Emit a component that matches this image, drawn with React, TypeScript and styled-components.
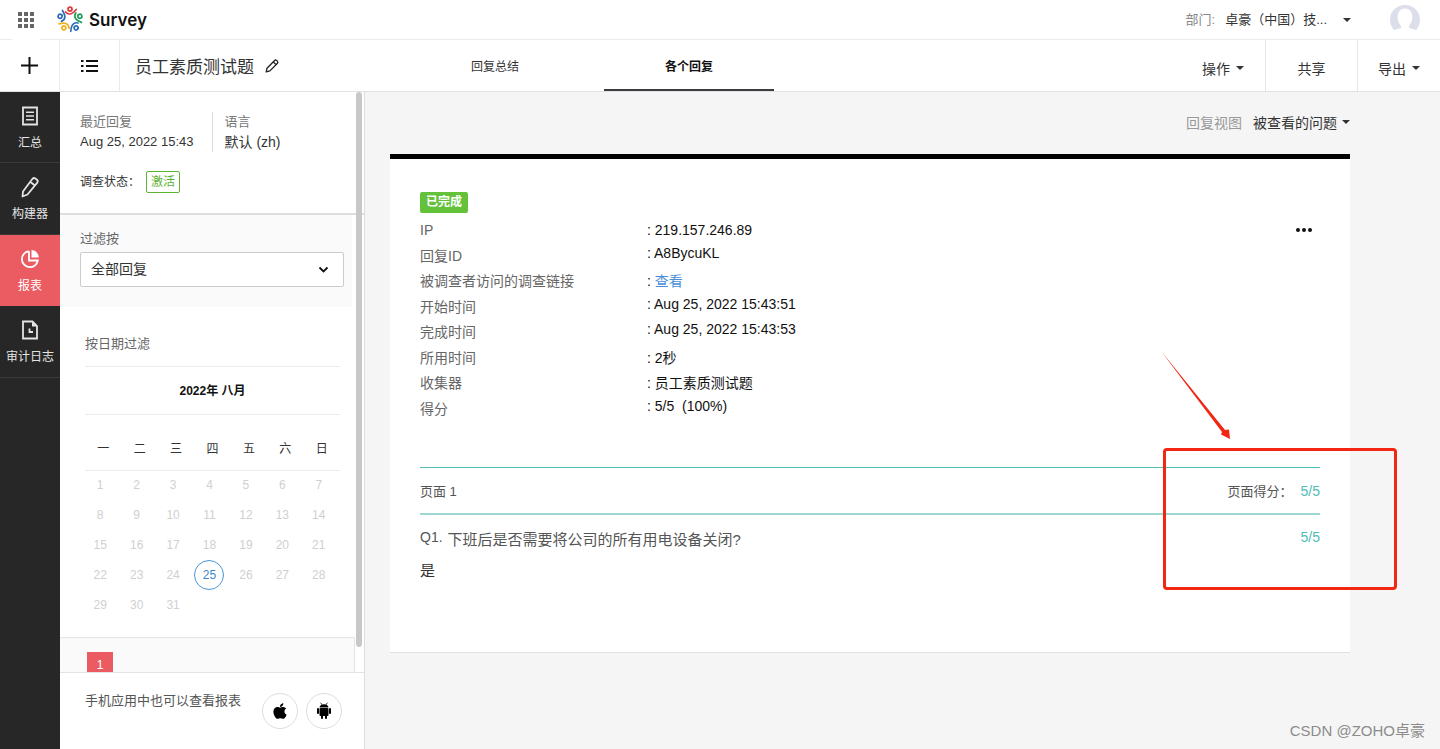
import React from "react";
import styled, { createGlobalStyle } from "styled-components";
import { FaApple } from "react-icons/fa";

const GlobalStyle = createGlobalStyle`
  * { box-sizing: border-box; }
  body {
    margin: 0;
    background: #f5f5f5;
    color: #333;
    font-family: "Liberation Sans", "Noto Sans CJK SC", sans-serif;
    font-size: 14px;
  }
  button, select { font: inherit; color: inherit; }
`;

const Shell = styled.div`
  position: relative;
  display: flex;
  flex-direction: column;
  height: 100vh;
  min-height: 640px;
  overflow: hidden;
`;

const PlainButton = styled.button`
  display: flex;
  align-items: center;
  justify-content: center;
  padding: 0;
  border: 0;
  background: none;
  cursor: pointer;
`;

/* Top bar */

const TopBar = styled.header`
  display: flex;
  align-items: center;
  flex: none;
  height: 40px;
  background: #fff;
  border-bottom: 1px solid #ebebeb;
`;

const AppsButton = styled(PlainButton)`
  width: 28px;
  height: 40px;
  margin: 0 16px -1px 12px;
  background: #fff;
`;

const Brand = styled.a`
  display: flex;
  align-items: center;
  gap: 5px;
  color: #111;
  font: 600 17px/24px Inter, sans-serif;
  text-decoration: none;
`;

const Department = styled.div`
  display: flex;
  align-items: center;
  margin-left: auto;
  font-size: 13px;
  line-height: 20px;
  color: #888;
`;

const DepartmentButton = styled(PlainButton)`
  gap: 16px;
  margin-left: 10px;
  color: #333;
`;

const Avatar = styled(PlainButton)`
  margin: 0 19px 0 38px;
`;

const Caret = styled.span`
  border: 4px solid transparent;
  border-top-color: currentColor;
  border-bottom: 0;
`;

/* Survey bar */

const SurveyBar = styled.div`
  display: flex;
  flex: none;
  height: 52px;
  background: #fff;
  border-bottom: 1px solid #e2e2e2;
`;

const SquareButton = styled(PlainButton)`
  width: 60px;
  border-right: 1px solid #ebebeb;
  color: #111;
`;

const Title = styled.h1`
  display: flex;
  align-items: center;
  gap: 10px;
  width: 290px;
  margin: 0;
  padding-left: 15px;
  font-size: 17px;
  font-weight: 400;
`;

const Tabs = styled.nav`
  display: flex;
  gap: 24px;
  margin-right: auto;
`;

const Tab = styled.a<{ $active?: boolean }>`
  display: flex;
  align-items: center;
  justify-content: center;
  width: 170px;
  border-top: 2px solid transparent;
  border-bottom: 2px solid ${(p) => (p.$active ? "#3c3c40" : "transparent")};
  color: ${(p) => (p.$active ? "#111" : "#333")};
  font-size: 12px;
  font-weight: ${(p) => (p.$active ? 700 : 400)};
  text-decoration: none;
`;

const Action = styled(PlainButton)<{ $first?: boolean }>`
  gap: 6px;
  width: ${(p) => (p.$first ? 84 : 92)}px;
  padding-top: 4px;
  border-left: ${(p) => (p.$first ? "0" : "1px solid #e6e6e6")};
  &:last-child { width: 83px; }
`;

/* Body */

const Body = styled.div`
  display: flex;
  flex: 1;
  min-height: 0;
`;

const Rail = styled.nav`
  flex: none;
  width: 60px;
  background: #272727;
`;

const RailLink = styled.a<{ $active?: boolean }>`
  display: flex;
  flex-direction: column;
  align-items: center;
  gap: 6px;
  height: 71px;
  padding-top: 12px;
  border-bottom: 1px solid ${(p) => (p.$active ? "#ea5c62" : "#3a3a3a")};
  background: ${(p) => (p.$active ? "#ea5c62" : "transparent")};
  color: ${(p) => (p.$active ? "#fff" : "#e4e4e4")};
  font-size: 12px;
  line-height: 18px;
  text-decoration: none;
  &:nth-child(even) { height: 72px; }
`;

const Side = styled.aside`
  display: flex;
  flex-direction: column;
  flex: none;
  width: 305px;
  background: #fff;
  border-right: 1px solid #ddd;
`;

const SideScroll = styled.div`
  position: relative;
  flex: 1;
  min-height: 0;
  overflow: hidden;
`;

const ScrollThumb = styled.div`
  position: absolute;
  top: 0;
  right: 2px;
  bottom: 25px;
  width: 6px;
  border-radius: 3px;
  background: #c8c8c8;
`;

const Summary = styled.section`
  height: 123px;
  padding: 20px 20px 0;
  border-bottom: 2px solid #dedede;
`;

const Facts = styled.dl`
  display: flex;
  margin: 0;
`;

const Fact = styled.div`
  padding-right: 18px;
  & + & {
    padding-left: 12px;
    border-left: 1px solid #ddd;
  }
`;

const FactName = styled.dt`
  color: #777;
  font-size: 13px;
  line-height: 20px;
`;

const FactValue = styled.dd<{ $large?: boolean }>`
  margin: 0;
  font-size: ${(p) => (p.$large ? 14 : 13)}px;
  line-height: 20px;
`;

const Status = styled.div`
  display: flex;
  align-items: center;
  gap: 6px;
  margin-top: 19px;
  font-size: 12px;
  line-height: 22px;
`;

const StatusTag = styled.span`
  padding: 0 4px;
  border: 1px solid #5cb531;
  border-radius: 2px;
  color: #5cb531;
  line-height: 20px;
`;

const FilterBox = styled.section`
  height: 92px;
  margin-right: 12px;
  padding: 14px 8px 0 20px;
  background: #fafafa;
`;

const FilterLabel = styled.label`
  display: block;
  color: #666;
  font-size: 13px;
  line-height: 20px;
`;

const SelectWrap = styled.div`
  position: relative;
  margin-top: 3px;
`;

const Select = styled.select`
  appearance: none;
  display: block;
  width: 100%;
  height: 35px;
  padding: 0 10px 2px;
  border: 1px solid #ccc;
  border-radius: 2px;
  background: #fff;
`;

const SelectArrow = styled.svg`
  position: absolute;
  top: 12px;
  right: 15px;
  pointer-events: none;
`;

const CalendarBox = styled.section`
  padding: 27px 24px 17px 25px;
`;

const CalendarTitle = styled.h2`
  margin: 0;
  padding-bottom: 12px;
  color: #666;
  font-size: 13px;
  font-weight: 400;
  line-height: 20px;
`;

const Month = styled.div`
  padding: 14px 0 13px;
  border: solid #ececec;
  border-width: 1px 0;
  color: #111;
  font-size: 12px;
  font-weight: 700;
  line-height: 20px;
  text-align: center;
`;

const Calendar = styled.table`
  width: 100%;
  margin-top: 17px;
  table-layout: fixed;
  border-collapse: collapse;
  font-size: 12px;
  text-align: center;
`;

const Weekday = styled.th`
  height: 38px;
  padding: 0 0 6px;
  border-bottom: 1px solid #ececec;
  font-weight: 400;
`;

const Day = styled.td`
  height: 30px;
  padding: 0 6px 0 0;
  color: #d0d0d0;
`;

const Today = styled.button`
  width: 30px;
  height: 30px;
  padding: 0;
  border: 1px solid #4a96d8;
  border-radius: 50%;
  background: none;
  color: #3f87c8;
  vertical-align: middle;
`;

const Pager = styled.section`
  height: 60px;
  margin-right: 9px;
  padding: 14px 27px;
  border: 1px solid #e4e4e4;
  border-left: 0;
  background: #fafafa;
`;

const PageNumber = styled(PlainButton)`
  width: 26px;
  height: 26px;
  background: #ea5c62;
  color: #fff;
  font-size: 12px;
`;

const AppPromo = styled.footer`
  display: flex;
  gap: 8px;
  flex: none;
  height: 77px;
  padding: 20px 22px 0 25px;
  border-top: 1px solid #e4e4e4;
  color: #555;
  font-size: 13px;
  line-height: 16px;
`;

const PromoText = styled.span`
  margin-right: auto;
`;

const StoreLink = styled.a`
  display: flex;
  align-items: center;
  justify-content: center;
  width: 36px;
  height: 36px;
  border: 1px solid #ddd;
  border-radius: 50%;
  color: #000;
`;

/* Response */

const Main = styled.main`
  flex: 1;
  min-width: 0;
  padding: 0 90px 0 25px;
`;

const ViewBar = styled.div`
  display: flex;
  align-items: center;
  justify-content: flex-end;
  gap: 11px;
  height: 62px;
  padding-bottom: 2px;
  color: #999;
`;

const ViewButton = styled(PlainButton)`
  gap: 5px;
  color: #333;
`;

const Card = styled.article`
  padding: 33px 30px 70px;
  border-top: 5px solid #000;
  border-bottom: 1px solid #e2e2e2;
  background: #fff;
`;

const DoneTag = styled.span`
  display: inline-block;
  padding: 0 6px;
  border-radius: 2px;
  background: #63c23a;
  color: #fff;
  font-size: 12px;
  font-weight: 700;
  line-height: 21px;
  vertical-align: top;
`;

const Info = styled.div`
  display: flex;
  align-items: flex-start;
  justify-content: space-between;
  margin-top: 9px;
`;

const InfoTable = styled.table`
  border-collapse: collapse;
  line-height: normal;
`;

const InfoRow = styled.tr`
  height: 26px;
  vertical-align: top;
  &:nth-child(even) { height: 25px; }
  &:first-child { height: 23px; }
`;

const InfoName = styled.th`
  width: 227px;
  padding: 0;
  color: #666;
  font-weight: 400;
  text-align: left;
`;

const InfoValue = styled.td`
  padding: 0;
  color: #111;
  white-space: pre;
`;

const Link = styled.a`
  color: #4a8fd6;
  text-decoration: none;
`;

const MoreButton = styled(PlainButton)`
  width: 32px;
  height: 16px;
  color: #111;
`;

const PageHeading = styled.div`
  display: flex;
  align-items: center;
  height: 48px;
  margin-top: 44px;
  border-top: 1px solid #52bcb8;
  border-bottom: 2px solid #9dd6d2;
  color: #555;
  font-size: 13px;
`;

const ScoreLabel = styled.span`
  margin-left: auto;
  margin-right: 8px;
`;

const Score = styled.span`
  color: #4fbcb5;
  font-size: 14px;
`;

const Question = styled.div`
  display: flex;
  gap: 5px;
  padding-top: 14px;
  color: #555;
`;

const QuestionText = styled.h3`
  margin: 0 auto 0 0;
  font-size: 15px;
  font-weight: 400;
  line-height: 22px;
`;

const Answer = styled.p`
  margin: 9px 0 0;
  font-size: 15px;
  line-height: 22px;
`;

/* Markup drawn over the page */

const MarkBox = styled.div`
  position: absolute;
  top: 448px;
  right: 43px;
  width: 234px;
  height: 142px;
  border: 3px solid #f22613;
  border-radius: 4px;
  pointer-events: none;
`;

const MarkArrow = styled.svg`
  position: absolute;
  top: 350px;
  right: 209px;
  pointer-events: none;
`;

const Watermark = styled.div`
  position: absolute;
  right: 15px;
  bottom: 6px;
  color: #8c8c8c;
  font-size: 15px;
  line-height: 24px;
`;

const AppsIcon = () => (
  <svg width="16" height="16" fill="#666" aria-hidden="true">
    {[0, 6, 12].map((y) => [0, 6, 12].map((x) => <rect key={`${x}-${y}`} x={x} y={y} width="4" height="4" />))}
  </svg>
);

const figures = ["#e0393b", "#1f9d58", "#2b6cb8", "#f0b020", "#2b6cb8"];

const LogoIcon = () => (
  <svg width="28" height="28" viewBox="-14 -13.5 28 28" fill="none" strokeWidth="1.7" strokeLinecap="round" aria-hidden="true">
    {figures.map((color, i) => (
      <g key={i} stroke={color} transform={`rotate(${i * 72})`}>
        <circle cx="0" cy="-10.4" r="2" />
        <path d="M-4.400 -7.600C-3 -5.600 -1 -5.200 1 -5.700C3 -6.300 4.500 -7.800 6.300 -10" />
      </g>
    ))}
  </svg>
);

const PencilIcon = ({ size, stroke }: { size: number; stroke: number }) => (
  <svg width={size} height={size} viewBox="0 0 24 24" fill="none" stroke="currentColor" strokeWidth={stroke} strokeLinejoin="round" aria-hidden="true">
    <path d="M4.500 21.500 5 16.500 14.500 3.800Q15.800 2.400 17.300 3.500L19 4.800Q20.400 6 19.300 7.600L9.500 19.500Z M12.300 6.700 16.800 10.500" />
  </svg>
);

const TitlePencilIcon = () => (
  <svg width="16" height="16" fill="none" stroke="#222" strokeWidth="1.3" strokeLinejoin="round" aria-hidden="true">
    <path d="M2.200 13.800 3 10.200 10.600 2.500Q11.600 1.600 12.600 2.500L13.500 3.400Q14.300 4.300 13.500 5.300L5.900 12.900Z M9.300 3.900 12.100 6.700" />
  </svg>
);

const SummaryIcon = () => (
  <svg width="24" height="24" fill="none" stroke="currentColor" strokeWidth="1.8" aria-hidden="true">
    <path d="M5 3.500H19V20.500H5Z" />
    <path d="M8 8.300H16M8 12H16M8 15.700H16" strokeWidth="1.600" />
  </svg>
);

const ReportIcon = () => (
  <svg width="24" height="24" fill="none" stroke="currentColor" strokeWidth="1.8" aria-hidden="true">
    <path d="M10.800 4.200A8 8 0 1 0 19.800 13.500H11V4.200" />
    <path d="M13.500 3V10.500H20.800C20.600 6.300 17.700 3.300 13.500 3Z" fill="currentColor" stroke="none" />
  </svg>
);

const LogIcon = () => (
  <svg width="24" height="24" fill="none" stroke="currentColor" strokeWidth="1.8" aria-hidden="true">
    <path d="M5 3.500H14.500L19 8V20.500H5Z" />
    <path d="M14 3.500 19 8.500H14Z" fill="currentColor" stroke="none" />
    <path d="M11.500 10.500V14H15" />
  </svg>
);

const AndroidIcon = () => (
  <svg width="16" height="18" fill="currentColor" aria-hidden="true">
    <path d="M3.500 5.500C3.600 1 12.400 1 12.500 5.500Z" />
    <path d="M4.700 .700 5.900 2.800M11.300 .700 10.100 2.800" stroke="currentColor" strokeWidth=".8" />
    <rect x="3.500" y="6" width="9" height="8" rx="1" />
    <rect x="1" y="6" width="2" height="6" rx="1" />
    <rect x="13" y="6" width="2" height="6" rx="1" />
    <rect x="5" y="12" width="2" height="5" rx="1" />
    <rect x="9" y="12" width="2" height="5" rx="1" />
  </svg>
);

const rail = [
  { label: "汇总", icon: <SummaryIcon /> },
  { label: "构建器", icon: <PencilIcon size={24} stroke={1.8} /> },
  { label: "报表", icon: <ReportIcon />, active: true },
  { label: "审计日志", icon: <LogIcon /> },
];

const info: [string, React.ReactNode][] = [
  ["IP", "219.157.246.89"],
  ["回复ID", "A8BycuKL"],
  ["被调查者访问的调查链接", <Link href="#survey">查看</Link>],
  ["开始时间", "Aug 25, 2022 15:43:51"],
  ["完成时间", "Aug 25, 2022 15:43:53"],
  ["所用时间", "2秒"],
  ["收集器", "员工素质测试题"],
  ["得分", "5/5  (100%)"],
];

const weeks = [0, 7, 14, 21, 28].map((start) =>
  [1, 2, 3, 4, 5, 6, 7].map((d) => (start + d <= 31 ? start + d : null))
);

export default function App() {
  return (
    <Shell>
      <GlobalStyle />
      <TopBar>
        <AppsButton aria-label="Apps"><AppsIcon /></AppsButton>
        <Brand href="#home"><LogoIcon />Survey</Brand>
        <Department>
          部门:
          <DepartmentButton>卓豪（中国）技... <Caret /></DepartmentButton>
        </Department>
        <Avatar aria-label="Account">
          <svg width="32" height="30" fill="#dcdfea" aria-hidden="true">
            <path d="M5 25A15 15 0 1 1 27 25L20 23V21C25 16 25 3.500 16 3.500S7 16 12 21V23Z" />
          </svg>
        </Avatar>
      </TopBar>

      <SurveyBar>
        <SquareButton aria-label="New">
          <svg width="17" height="17" stroke="currentColor" strokeWidth="2"><path d="M8.500 0V17M0 8.500H17" /></svg>
        </SquareButton>
        <SquareButton aria-label="List">
          <svg width="17" height="14" stroke="currentColor" strokeWidth="2"><path d="M0 2H2.500M5 2H17M0 7H2.500M5 7H17M0 12H2.500M5 12H17" /></svg>
        </SquareButton>
        <Title>员工素质测试题<TitlePencilIcon /></Title>
        <Tabs>
          <Tab href="#summary">回复总结</Tab>
          <Tab href="#responses" $active>各个回复</Tab>
        </Tabs>
        <Action $first>操作<Caret /></Action>
        <Action>共享</Action>
        <Action>导出<Caret /></Action>
      </SurveyBar>

      <Body>
        <Rail>
          {rail.map((item) => (
            <RailLink key={item.label} href="#section" $active={item.active}>{item.icon}{item.label}</RailLink>
          ))}
        </Rail>

        <Side>
          <SideScroll>
            <Summary>
              <Facts>
                <Fact>
                  <FactName>最近回复</FactName>
                  <FactValue>Aug 25, 2022 15:43</FactValue>
                </Fact>
                <Fact>
                  <FactName>语言</FactName>
                  <FactValue $large>默认 (zh)</FactValue>
                </Fact>
              </Facts>
              <Status>调查状态：<StatusTag>激活</StatusTag></Status>
            </Summary>
            <FilterBox>
              <FilterLabel htmlFor="filter">过滤按</FilterLabel>
              <SelectWrap>
                <Select id="filter"><option>全部回复</option></Select>
                <SelectArrow width="11" height="11" fill="none" stroke="#111" strokeWidth="1.8">
                  <path d="M1.500 3.500 5.500 7.500 9.500 3.500" />
                </SelectArrow>
              </SelectWrap>
            </FilterBox>
            <CalendarBox>
              <CalendarTitle>按日期过滤</CalendarTitle>
              <Month>2022年 八月</Month>
              <Calendar>
                <thead>
                  <tr>{[..."一二三四五六日"].map((d) => <Weekday key={d}>{d}</Weekday>)}</tr>
                </thead>
                <tbody>
                  {weeks.map((week, i) => (
                    <tr key={i}>
                      {week.map((d, j) => <Day key={j}>{d === 25 ? <Today>25</Today> : d}</Day>)}
                    </tr>
                  ))}
                </tbody>
              </Calendar>
            </CalendarBox>
            <Pager><PageNumber>1</PageNumber></Pager>
            <ScrollThumb />
          </SideScroll>
          <AppPromo>
            <PromoText>手机应用中也可以查看报表</PromoText>
            <StoreLink href="#ios" aria-label="iOS"><FaApple size={18} /></StoreLink>
            <StoreLink href="#android" aria-label="Android"><AndroidIcon /></StoreLink>
          </AppPromo>
        </Side>

        <Main>
          <ViewBar>
            回复视图
            <ViewButton>被查看的问题<Caret /></ViewButton>
          </ViewBar>
          <Card>
            <DoneTag>已完成</DoneTag>
            <Info>
              <InfoTable>
                <tbody>
                  {info.map(([name, value]) => (
                    <InfoRow key={name}>
                      <InfoName scope="row">{name}</InfoName>
                      <InfoValue>: {value}</InfoValue>
                    </InfoRow>
                  ))}
                </tbody>
              </InfoTable>
              <MoreButton aria-label="More">
                <svg width="16" height="4" fill="currentColor"><circle cx="2" cy="2" r="2" /><circle cx="8" cy="2" r="2" /><circle cx="14" cy="2" r="2" /></svg>
              </MoreButton>
            </Info>
            <PageHeading>
              页面 1
              <ScoreLabel>页面得分：</ScoreLabel>
              <Score>5/5</Score>
            </PageHeading>
            <Question>
              <span>Q1.</span>
              <QuestionText>下班后是否需要将公司的所有用电设备关闭?</QuestionText>
              <Score>5/5</Score>
            </Question>
            <Answer>是</Answer>
          </Card>
        </Main>
      </Body>

      <MarkBox />
      <MarkArrow width="71" height="90" fill="#f22613"><path d="M1 1 65 80 69 79.500 70 89 61 84.500 62 82Z" /></MarkArrow>
      <Watermark>CSDN @ZOHO卓豪</Watermark>
    </Shell>
  );
}
